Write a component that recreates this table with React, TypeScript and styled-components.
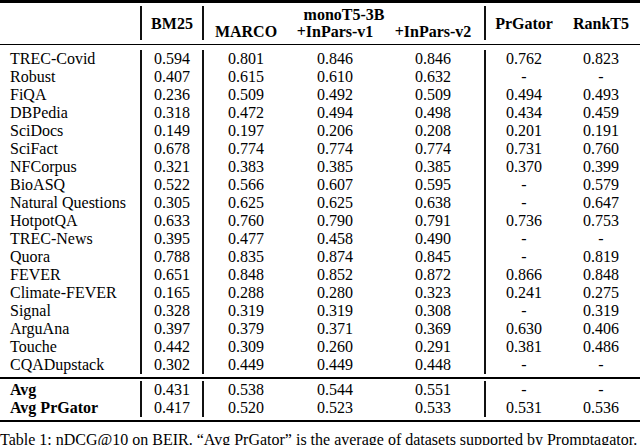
import React from "react"
import styled, { createGlobalStyle } from "styled-components"

const GlobalStyle = createGlobalStyle`
  html, body {
    margin: 0;
    background: #fff;
  }
`

const COLS = "140px 62px 86px 94px 102px 78px 78px"

const Page = styled.div`
  width: 640px;
  height: 445px;
  overflow: hidden;
  font-family: "Liberation Serif", "Times New Roman", serif;
  font-size: 16px;
  color: #000;
`

const Rule = styled.div<{ $h: number }>`
  height: ${(p) => p.$h}px;
  background: #000;
`

const Section = styled.div<{ $pt: number; $pb: number }>`
  padding: ${(p) => p.$pt}px 0 ${(p) => p.$pb}px;
`

const HeadGrid = styled.div`
  display: grid;
  grid-template-columns: ${COLS};
  grid-template-rows: 17px 17px;
  line-height: 17px;
  font-weight: bold;
`

const HeadCell = styled.div<{ $col: string; $row: string; $line?: boolean }>`
  grid-column: ${(p) => p.$col};
  grid-row: ${(p) => p.$row};
  display: flex;
  align-items: center;
  justify-content: center;
  white-space: nowrap;
  border-left: ${(p) => (p.$line ? "2px solid #111" : "none")};
`

const Row = styled.div`
  display: grid;
  grid-template-columns: ${COLS};
  line-height: 18px;
  height: 18px;
`

const Cell = styled.div<{ $line?: boolean }>`
  text-align: center;
  white-space: nowrap;
  border-left: ${(p) => (p.$line ? "2px solid #111" : "none")};
`

const Label = styled.div<{ $bold?: boolean }>`
  padding-left: 10px;
  white-space: nowrap;
  font-weight: ${(p) => (p.$bold ? "bold" : "normal")};
`

const Caption = styled.div`
  padding-top: 9px;
  line-height: 18px;
  white-space: nowrap;
`

type Data = [string, string, string, string, string, string, string]

const rows: Data[] = [
  ["TREC-Covid", "0.594", "0.801", "0.846", "0.846", "0.762", "0.823"],
  ["Robust", "0.407", "0.615", "0.610", "0.632", "-", "-"],
  ["FiQA", "0.236", "0.509", "0.492", "0.509", "0.494", "0.493"],
  ["DBPedia", "0.318", "0.472", "0.494", "0.498", "0.434", "0.459"],
  ["SciDocs", "0.149", "0.197", "0.206", "0.208", "0.201", "0.191"],
  ["SciFact", "0.678", "0.774", "0.774", "0.774", "0.731", "0.760"],
  ["NFCorpus", "0.321", "0.383", "0.385", "0.385", "0.370", "0.399"],
  ["BioASQ", "0.522", "0.566", "0.607", "0.595", "-", "0.579"],
  ["Natural Questions", "0.305", "0.625", "0.625", "0.638", "-", "0.647"],
  ["HotpotQA", "0.633", "0.760", "0.790", "0.791", "0.736", "0.753"],
  ["TREC-News", "0.395", "0.477", "0.458", "0.490", "-", "-"],
  ["Quora", "0.788", "0.835", "0.874", "0.845", "-", "0.819"],
  ["FEVER", "0.651", "0.848", "0.852", "0.872", "0.866", "0.848"],
  ["Climate-FEVER", "0.165", "0.288", "0.280", "0.323", "0.241", "0.275"],
  ["Signal", "0.328", "0.319", "0.319", "0.308", "-", "0.319"],
  ["ArguAna", "0.397", "0.379", "0.371", "0.369", "0.630", "0.406"],
  ["Touche", "0.442", "0.309", "0.260", "0.291", "0.381", "0.486"],
  ["CQADupstack", "0.302", "0.449", "0.449", "0.448", "-", "-"],
]

const avgRows: Data[] = [
  ["Avg", "0.431", "0.538", "0.544", "0.551", "-", "-"],
  ["Avg PrGator", "0.417", "0.520", "0.523", "0.533", "0.531", "0.536"],
]

const DataRow: React.FC<{ data: Data; bold?: boolean }> = ({ data, bold }) => (
  <Row>
    <Label $bold={bold}>{data[0]}</Label>
    <Cell $line>{data[1]}</Cell>
    <Cell $line>{data[2]}</Cell>
    <Cell>{data[3]}</Cell>
    <Cell>{data[4]}</Cell>
    <Cell $line>{data[5]}</Cell>
    <Cell>{data[6]}</Cell>
  </Row>
)

export default function App() {
  return (
    <Page>
      <GlobalStyle />
      <Rule $h={3} />
      <Section $pt={3} $pb={4}>
        <HeadGrid>
          <HeadCell $col="1" $row="1 / 3" />
          <HeadCell $col="2" $row="1 / 3" $line>
            BM25
          </HeadCell>
          <HeadCell $col="3 / 6" $row="1" $line>
            monoT5-3B
          </HeadCell>
          <HeadCell $col="3" $row="2" $line>
            MARCO
          </HeadCell>
          <HeadCell $col="4" $row="2">
            +InPars-v1
          </HeadCell>
          <HeadCell $col="5" $row="2">
            +InPars-v2
          </HeadCell>
          <HeadCell $col="6" $row="1 / 3" $line>
            PrGator
          </HeadCell>
          <HeadCell $col="7" $row="1 / 3">
            RankT5
          </HeadCell>
        </HeadGrid>
      </Section>
      <Rule $h={1} />
      <Section $pt={5} $pb={3}>
        {rows.map((r) => (
          <DataRow key={r[0]} data={r} />
        ))}
      </Section>
      <Rule $h={2} />
      <Section $pt={2} $pb={3}>
        {avgRows.map((r) => (
          <DataRow key={r[0]} data={r} bold />
        ))}
      </Section>
      <Rule $h={2} />
      <Caption>
        Table 1: nDCG@10 on BEIR. “Avg PrGator” is the average of datasets
        supported by Promptagator.
      </Caption>
    </Page>
  )
}
